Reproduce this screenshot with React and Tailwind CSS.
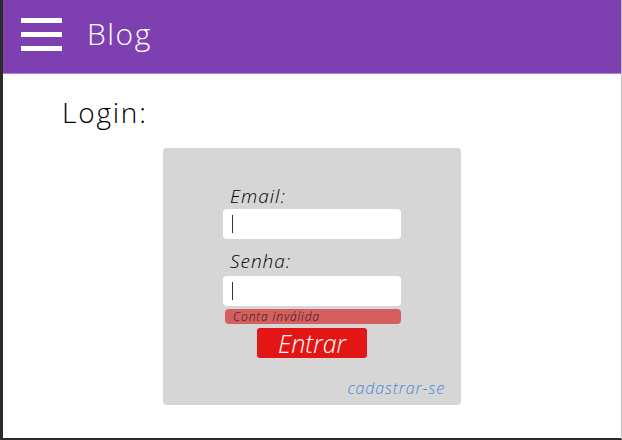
export default function App() {
  const font = { fontFamily: '"Open Sans", Lato, sans-serif' };
  return (
    <div
      style={font}
      className="h-[440px] w-[622px] flex flex-col border-l-[3px] border-l-[#2b2b2b] border-b-2 border-b-[#2b2b2b] border-r border-r-[#c2c2c2] bg-white font-light"
    >
      {/* Header */}
      <header className="h-[74px] shrink-0 bg-[#7e40b0] border-b border-b-[#b27ddc] flex items-center">
        <button className="ml-[18px] -mt-[5px] flex flex-col gap-[9px] w-[41px]">
          <span className="block h-[5px] bg-white" />
          <span className="block h-[5px] bg-white" />
          <span className="block h-[5px] bg-white" />
        </button>
        <h1 className="ml-[25px] text-[30px] tracking-[1.5px] text-white font-light -mt-[6px]">Blog</h1>
      </header>

      {/* Content */}
      <main className="flex-1 flex flex-col">
        <h2 className="ml-[59px] mt-[19px] text-[28px] tracking-[1.8px] leading-[38px] text-black font-light">Login:</h2>

        <div className="ml-[160px] mt-[17px] w-[298px] h-[257px] rounded-[4px] bg-[#d6d6d6] flex flex-col">
          <div className="ml-[60px] mt-[36px] w-[178px] flex flex-col">
            <label className="ml-[7px] text-[19px] tracking-[1px] leading-[24px] italic text-black">Email:</label>
            <div className="mt-[1px] h-[30px] rounded-[4px] bg-white flex items-center pl-[9px]">
              <span className="block w-px h-[18px] bg-[#333]" />
            </div>
            <label className="ml-[7px] mt-[10px] text-[19px] tracking-[1px] leading-[24px] italic text-black">Senha:</label>
            <div className="mt-[3px] h-[30px] rounded-[4px] bg-white flex items-center pl-[9px]">
              <span className="block w-px h-[18px] bg-[#333]" />
            </div>
            <div className="ml-[2px] mt-[3px] h-[15px] rounded-[4px] bg-[#d55e5e] flex items-center pl-[8px]">
              <span className="text-[12px] tracking-[0.9px] leading-[15px] italic text-[#1a1a1a]">Conta inválida</span>
            </div>
            <button className="ml-[34px] mt-[4px] w-[110px] h-[30px] rounded-[3px] bg-[#e31515] text-white text-[25px] leading-[30px] italic font-light">
              Entrar
            </button>
          </div>
          <div className="mt-auto mb-[6px] mr-[16px] self-end text-[16px] tracking-[0.9px] leading-[22px] italic text-[#4c88d2]">
            cadastrar-se
          </div>
        </div>
      </main>
    </div>
  );
}
